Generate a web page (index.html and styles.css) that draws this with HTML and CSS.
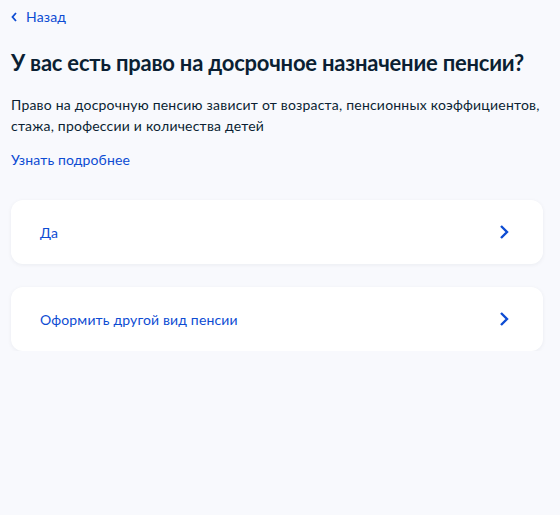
FILE: index.html
```html
<!DOCTYPE html>
<html lang="ru">
<head>
<meta charset="utf-8">
<link rel="stylesheet" href="styles.css">
</head>
<body>
<div class="page">
  <a class="back" href="#">
    <svg class="back-icon" width="6" height="10" viewBox="0 0 6 10"><path d="M5 1 L1.5 5 L5 9" fill="none" stroke="#0d4cd3" stroke-width="1.8"/></svg>
    <span>Назад</span>
  </a>
  <h1 class="title">У вас есть право на досрочное назначение пенсии?</h1>
  <p class="desc">Право на досрочную пенсию зависит от возраста, пенсионных коэффициентов, стажа, профессии и количества детей</p>
  <a class="more" href="#">Узнать подробнее</a>
  <div class="options">
    <div class="option">
      <span class="option-text">Да</span>
      <svg class="chev" width="10" height="16" viewBox="0 0 10 16"><path d="M2 2 L8 8 L2 14" fill="none" stroke="#0d4cd3" stroke-width="2.4"/></svg>
    </div>
    <div class="option">
      <span class="option-text">Оформить другой вид пенсии</span>
      <svg class="chev" width="10" height="16" viewBox="0 0 10 16"><path d="M2 2 L8 8 L2 14" fill="none" stroke="#0d4cd3" stroke-width="2.4"/></svg>
    </div>
  </div>
</div>
</body>
</html>
```

FILE: styles.css
```css
html, body {
  margin: 0;
  padding: 0;
  background: #f8f9fd;
}
body {
  font-family: Lato, "Noto Sans", sans-serif;
  color: #0b1f33;
}
.page {
  padding: 7px 17px 0 11px;
}
.back {
  display: flex;
  align-items: center;
  gap: 9px;
  color: #0d4cd3;
  text-decoration: none;
  font-size: 14px;
  line-height: 20px;
  letter-spacing: 0.15px;
}
.back-icon {
  display: block;
}
.title {
  margin: 22px 0 0;
  font-size: 22px;
  line-height: 28px;
  font-weight: 700;
  letter-spacing: -0.22px;
}
.desc {
  margin: 17px 0 0;
  font-size: 14px;
  line-height: 21px;
  letter-spacing: 0.21px;
}
.more {
  display: block;
  margin-top: 14px;
  font-size: 14px;
  line-height: 20px;
  letter-spacing: 0.13px;
  color: #0d4cd3;
  text-decoration: none;
}
.options {
  margin-top: 30px;
  display: flex;
  flex-direction: column;
  gap: 23px;
}
.option {
  display: flex;
  align-items: center;
  justify-content: space-between;
  height: 64px;
  padding: 0 34px 0 29px;
  background: #fff;
  border-radius: 12px;
  box-shadow: 0 1px 4px rgba(11, 31, 51, 0.06);
}
.option-text {
  font-size: 14px;
  letter-spacing: 0.15px;
  color: #0d4cd3;
}
.chev {
  display: block;
}
```
